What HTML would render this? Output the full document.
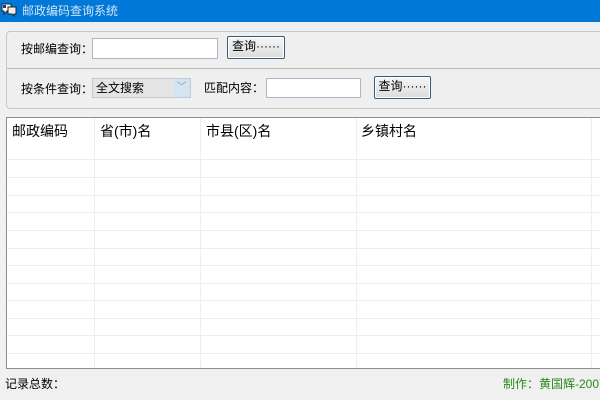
<!DOCTYPE html>
<html><head><meta charset="utf-8"><style>
*{margin:0;padding:0;box-sizing:border-box}
body{width:600px;height:400px;background:#f0f0f0;position:relative;overflow:hidden;font-family:"Liberation Sans","Noto Sans CJK SC",sans-serif;font-size:12px;color:#000}
.a{position:absolute}
.t{white-space:nowrap;line-height:14px}
.inp{background:#fff;border:1px solid #a9b8c8}
.btn{border:1px solid #3c5a80;border-radius:2px;background:linear-gradient(#f6f6f6,#dcdcdc);box-shadow:inset 0 0 0 1px #fff;text-align:center;line-height:19px;font-size:12px}
.hl{position:absolute;left:7px;right:0;height:1px;background:#eceef0}
.vl{position:absolute;top:118px;height:250px;width:1px;background:#eceef0}
</style></head><body>
<div class="a" style="left:0;top:0;width:600px;height:22px;background:#0078d7"></div>
<svg class="a" style="left:1px;top:2px" width="16" height="15" viewBox="0 0 16 15"><path d="M1 2h9v7H6l-3 3v-3H1z" fill="#fff" stroke="#222"/><path d="M7 5h8v7h-2v2l-2-2H7z" fill="#eee" stroke="#222"/><rect x="2" y="3" width="3" height="3" fill="#1a3a8a"/></svg>
<div class="a t" style="left:22px;top:4px;color:#cfe4fa;font-size:12px">邮政编码查询系统</div>
<div class="a" style="left:6px;top:31px;width:600px;height:78px;border:1px solid #c8c8c8;border-radius:4px;background:#efefef"></div>
<div class="a" style="left:7px;top:68px;width:593px;height:1px;background:#b4bcb4"></div>
<div class="a t" style="left:21px;top:42px">按邮编查询：</div>
<div class="a inp" style="left:92px;top:38px;width:126px;height:21px"></div>
<div class="a btn" style="left:227px;top:36px;width:58px;height:23px">查询······</div>
<div class="a t" style="left:21px;top:82px">按条件查询：</div>
<div class="a" style="left:92px;top:78px;width:99px;height:20px;background:#e4e4e4;border:1px solid #c0cad6"></div>
<div class="a t" style="left:96px;top:81px">全文搜索</div>
<div class="a" style="left:173px;top:79px;width:17px;height:18px;background:#d6e4f2;color:#7a98c0;font-size:10px;text-align:center;line-height:18px">﹀</div>
<div class="a t" style="left:204px;top:81px">匹配内容：</div>
<div class="a inp" style="left:266px;top:78px;width:95px;height:20px"></div>
<div class="a btn" style="left:374px;top:76px;width:57px;height:23px">查询······</div>
<div class="a" style="left:6px;top:117px;width:600px;height:252px;background:#fff;border:1px solid #8e8e8e"></div>
<div class="hl" style="top:159px"></div><div class="hl" style="top:177px"></div><div class="hl" style="top:195px"></div><div class="hl" style="top:212px"></div><div class="hl" style="top:230px"></div><div class="hl" style="top:248px"></div><div class="hl" style="top:265px"></div><div class="hl" style="top:283px"></div><div class="hl" style="top:300px"></div><div class="hl" style="top:318px"></div><div class="hl" style="top:335px"></div><div class="hl" style="top:353px"></div>
<div class="vl" style="left:94px"></div><div class="vl" style="left:200px"></div><div class="vl" style="left:356px"></div><div class="vl" style="left:591px"></div>
<div class="a t" style="left:12px;top:123px;font-size:14px;line-height:16px">邮政编码</div>
<div class="a t" style="left:100px;top:123px;font-size:14px;line-height:16px">省(市)名</div>
<div class="a t" style="left:206px;top:123px;font-size:14px;line-height:16px">市县(区)名</div>
<div class="a t" style="left:361px;top:123px;font-size:14px;line-height:16px">乡镇村名</div>
<div class="a t" style="left:5px;top:377px">记录总数：</div>
<div class="a t" style="left:503px;top:377px;color:#2a8a1a">制作：黄国辉-2007</div>
</body></html>
